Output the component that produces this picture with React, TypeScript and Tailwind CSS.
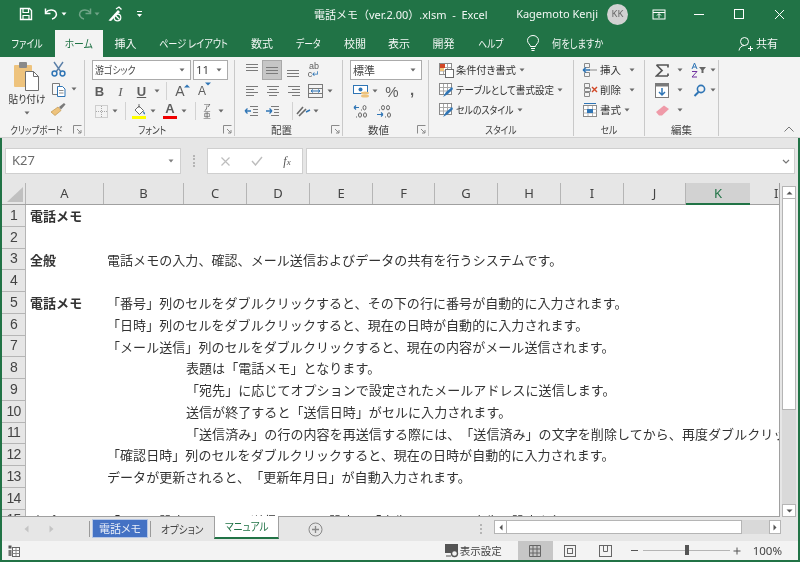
import React from "react";

const jp = "font-['Noto_Sans','Noto_Sans_CJK_JP',sans-serif]";
const ui = "font-['Noto_Sans_CJK_JP','Noto_Sans',sans-serif] [font-feature-settings:'palt']";

function Ic({ w = 16, h = 16, children, className = "" }: { w?: number; h?: number; children: React.ReactNode; className?: string }) {
  return (
    <svg width={w} height={h} viewBox={`0 0 ${w} ${h}`} fill="none" className={"block shrink-0 " + className}>
      {children}
    </svg>
  );
}

function Dd({ c = "#6a6a6a" }: { c?: string }) {
  return (
    <Ic w={6} h={4}>
      <path d="M0.5 0.5H5.5L3 3.5Z" fill={c} />
    </Ic>
  );
}

function Launcher() {
  return (
    <Ic w={9} h={9}>
      <path d="M0.5 8.5V0.5H8.5M4 4L8 8M8 5V8H5" stroke="#8a8a8a" strokeWidth="1" />
    </Ic>
  );
}

function VSep({ h = "h-[18px]" }: { h?: string }) {
  return <div className={"w-px bg-[#d2d2d2] " + h} />;
}

function Lines({ rows }: { rows: [number, number, number][] }) {
  return (
    <Ic w={14} h={14}>
      {rows.map(([x1, x2, y], i) => (
        <path key={i} d={`M${x1} ${y + 0.5}H${x2}`} stroke="#7a7a7a" strokeWidth="1" />
      ))}
    </Ic>
  );
}

function Group({ w, label, labelCls = "", pad = "", launcher, children }: { w: string; label: string; labelCls?: string; pad?: string; launcher?: boolean; children: React.ReactNode }) {
  return (
    <div className={"relative h-full flex flex-col shrink-0 " + w}>
      <div className="flex-1 min-h-0">{children}</div>
      <div className={"h-[14px] flex items-center justify-center " + pad}>
        <span className={"inline-block whitespace-nowrap text-[10.5px] leading-none text-[#444] " + labelCls + " " + ui}>{label}</span>
      </div>
      {launcher && (
        <div className="absolute right-[2px] bottom-[3px]">
          <Launcher />
        </div>
      )}
    </div>
  );
}

function RibbonDivider() {
  return <div className="w-px h-[76px] mt-[3px] bg-[#c9c9c9] shrink-0" />;
}

function TitleBar() {
  return (
    <div className="h-[28px] flex items-center text-white relative shrink-0">
      <div className="flex items-center pl-[19px]">
        <Ic w={14} h={14}>
          <path d="M1.5 1.5H10.5L12.5 3.5V12.5H1.5Z" stroke="#fff" strokeWidth="1.4" />
          <path d="M4 2V5.5H9.5V2M4 12.5V8.5H10V12.5" stroke="#fff" strokeWidth="1.2" />
        </Ic>
        <div className="ml-[11px]">
          <Ic w={15} h={14}>
            <path d="M2 5.5C4 2.5 10 2 12 5.5C13.4 8.5 11 11.5 8 12" stroke="#fff" strokeWidth="1.5" />
            <path d="M1.5 1.5V6.5H6.5" stroke="#fff" strokeWidth="1.5" />
          </Ic>
        </div>
        <div className="ml-[2px]">
          <Dd c="#ffffff" />
        </div>
        <div className="ml-[10px] opacity-35">
          <Ic w={15} h={14}>
            <path d="M13 5.5C11 2.5 5 2 3 5.5C1.6 8.5 4 11.5 7 12" stroke="#fff" strokeWidth="1.5" />
            <path d="M13.5 1.5V6.5H8.5" stroke="#fff" strokeWidth="1.5" />
          </Ic>
        </div>
        <div className="ml-[2px] opacity-35">
          <Dd c="#ffffff" />
        </div>
        <div className="ml-[7px]">
          <Ic w={16} h={16}>
            <path d="M1.5 14.5L11 4L13 6L4 15Z" fill="#fff" />
            <path d="M9 3L12 1L14.5 3.5" stroke="#fff" strokeWidth="1.3" />
            <circle cx="10.5" cy="11.5" r="3.3" stroke="#fff" strokeWidth="1.2" />
            <path d="M8.5 9.5L12.5 13.5" stroke="#fff" strokeWidth="1.2" />
          </Ic>
        </div>
        <div className="ml-[13px]">
          <Ic w={7} h={7}>
            <path d="M1 0.5H6" stroke="#fff" />
            <path d="M1 3H6L3.5 6Z" fill="#fff" />
          </Ic>
        </div>
      </div>
      <div className={"absolute left-[314px] top-[7px] text-[11px] leading-[16px] whitespace-pre text-[#f2f7f4] " + jp}>電話メモ（ver.2.00）.xlsm  -  Excel</div>
      <div className="ml-auto flex items-center">
        <span className={"text-[11px] text-[#f2f7f4] " + jp}>Kagemoto Kenji</span>
        <div className={"ml-[9px] w-[21px] h-[21px] rounded-full bg-[#d2d2d2] text-[#6b6b6b] text-[9.5px] flex items-center justify-center " + jp}>KK</div>
        <div className="ml-[24px]">
          <Ic w={14} h={11}>
            <rect x="1" y="1" width="12" height="9" stroke="#fff" strokeWidth="1" />
            <path d="M1 3.5H13" stroke="#fff" />
            <path d="M7 9V5M5 6.5L7 4.5L9 6.5" stroke="#fff" />
          </Ic>
        </div>
        <div className="ml-[28px] w-[10px] h-px bg-white" />
        <div className="ml-[30px] w-[10px] h-[10px] border border-white" />
        <div className="ml-[30px] mr-[15px]">
          <Ic w={11} h={11}>
            <path d="M1 1L10 10M10 1L1 10" stroke="#fff" strokeWidth="1" />
          </Ic>
        </div>
      </div>
    </div>
  );
}

function Tab({ w, sc = "", children }: { w: string; sc?: string; children: React.ReactNode }) {
  return (
    <div className={"h-full flex items-center justify-center text-[11px] text-[#f2f7f4] whitespace-nowrap " + w + " " + ui}>
      <span className={"inline-block " + sc}>{children}</span>
    </div>
  );
}

function TabsRow() {
  return (
    <div className="h-[29px] flex items-end shrink-0">
      <div className="h-[27px] flex items-center w-full">
        <Tab w="w-[55px]" sc="scale-x-[.82]">ファイル</Tab>
        <div className={"h-full w-[48px] bg-[#f3f3f3] text-[#217346] text-[11px] flex items-center justify-center " + ui}>
          <span className="inline-block scale-x-[.9]">ホーム</span>
        </div>
        <Tab w="w-[45px]">挿入</Tab>
        <Tab w="w-[92px]" sc="scale-x-[.83]">ページ レイアウト</Tab>
        <Tab w="w-[44px]">数式</Tab>
        <Tab w="w-[49px]" sc="scale-x-[.8]">データ</Tab>
        <Tab w="w-[44px]">校閲</Tab>
        <Tab w="w-[44px]">表示</Tab>
        <Tab w="w-[45px]">開発</Tab>
        <Tab w="w-[49px]" sc="scale-x-[.8]">ヘルプ</Tab>
        <div className="ml-[11px]">
          <Ic w={14} h={17}>
            <path d="M4.5 11.5C4.5 9.5 1.5 8.5 1.5 5.5A5.5 5 0 0 1 12.5 5.5C12.5 8.5 9.5 9.5 9.5 11.5Z" stroke="#fff" strokeWidth="1" />
            <path d="M5 13.5H9M5.5 15.5H8.5" stroke="#fff" />
          </Ic>
        </div>
        <span className={"ml-[12px] inline-block origin-left scale-x-[.84] text-[11px] text-[#f2f7f4] " + ui}>何をしますか</span>
        <div className="ml-auto flex items-center mr-[22px]">
          <Ic w={15} h={16}>
            <circle cx="6.5" cy="5.5" r="4" stroke="#fff" strokeWidth="1" />
            <path d="M1 14.5C1.5 11 4 9.5 6.5 9.5M10 12.5H15M12.5 10V15" stroke="#fff" strokeWidth="1" />
          </Ic>
          <span className={"ml-[3px] text-[11px] text-[#f2f7f4] " + ui}>共有</span>
        </div>
      </div>
    </div>
  );
}

function Slot({ w, children }: { w: string; children?: React.ReactNode }) {
  return <div className={"h-full flex items-center justify-center shrink-0 " + w}>{children}</div>;
}

function ClipboardGroup() {
  return (
    <Group w="w-[84px]" label="クリップボード" labelCls="scale-x-[.81]" pad="pr-[11px]" launcher>
      <div className="flex h-full pl-[5px]">
        <div className="w-[43px] flex flex-col items-center pt-[4px]">
          <Ic w={27} h={30}>
            <rect x="1" y="4" width="18" height="22" rx="1" fill="#eec37d" />
            <rect x="6" y="1" width="8" height="6" rx="1" fill="#8a8a8a" />
            <path d="M12.5 10.5H20.5L25.5 15.5V29.5H12.5Z" fill="#fff" stroke="#6e6e6e" />
            <path d="M20.5 10.5V15.5H25.5" stroke="#6e6e6e" />
          </Ic>
          <div className={"mt-[1px] inline-block scale-x-[.92] text-[10.5px] leading-[14px] text-[#333] whitespace-nowrap " + ui}>貼り付け</div>
          <div className="mt-[5px]">
            <Dd />
          </div>
        </div>
        <div className="flex flex-col pt-[1px] pl-[1px]">
          <div className="h-[21px] flex items-center pl-[2px]">
            <Ic w={15} h={16}>
              <path d="M3 1L10 11M12 1L5 11" stroke="#5a7fa8" strokeWidth="1.4" />
              <circle cx="3.5" cy="12.5" r="2.4" stroke="#2f75b5" strokeWidth="1.5" />
              <circle cx="11.5" cy="12.5" r="2.4" stroke="#2f75b5" strokeWidth="1.5" />
            </Ic>
          </div>
          <div className="h-[20px] flex items-center pl-[2px]">
            <Ic w={15} h={15}>
              <path d="M1.5 1.5H8.5V12.5H1.5Z" fill="#f7f7f7" stroke="#7a7a7a" />
              <path d="M6.5 4.5H11.5L14 7V14.5H6.5Z" fill="#fff" stroke="#2f75b5" />
              <path d="M8 8.5H12.5M8 11H12.5" stroke="#8a8a8a" />
            </Ic>
            <div className="ml-[5px]">
              <Dd />
            </div>
          </div>
          <div className="h-[20px] flex items-center pl-[1px]">
            <Ic w={16} h={14}>
              <path d="M1 10L8 5L11 8.5L5 13.5Z" fill="#eec37d" stroke="#b98b3c" strokeWidth="0.6" />
              <path d="M9 5L14 1L15.5 2.5L11 7.5Z" fill="#7a7a7a" />
            </Ic>
          </div>
        </div>
      </div>
    </Group>
  );
}

function FormatLetter({ children, cls }: { children: React.ReactNode; cls: string }) {
  return <span className={"text-[#5d5d5d] text-[13px] leading-none " + cls}>{children}</span>;
}

function FontGroup() {
  return (
    <Group w="w-[149px]" label="フォント" labelCls="scale-x-[.82]" pad="pr-[14px]" launcher>
      <div className="pt-[3px]">
        <div className="flex h-[20px] pl-[7px]">
          <div className={"w-[99px] h-full bg-white border border-[#ababab] flex items-center pl-[2px] pr-[5px] text-[10.5px] text-[#444] " + ui}>
            <span className="flex-1 inline-block origin-left scale-x-[.85]">游ゴシック</span>
            <Dd />
          </div>
          <div className={"ml-[2px] w-[35px] h-full bg-white border border-[#ababab] flex items-center pl-[2px] pr-[5px] text-[11.5px] text-[#444] " + jp}>
            <span className="flex-1">11</span>
            <Dd />
          </div>
        </div>
        <div className="flex h-[20px] mt-[1px] items-center pl-[4px] font-['Liberation_Sans',sans-serif]">
          <Slot w="w-[21px]"><FormatLetter cls="font-bold">B</FormatLetter></Slot>
          <Slot w="w-[21px]"><FormatLetter cls="italic font-['Liberation_Serif',serif]">I</FormatLetter></Slot>
          <Slot w="w-[21px]"><FormatLetter cls="underline font-bold">U</FormatLetter></Slot>
          <Slot w="w-[9px]"><Dd /></Slot>
          <div className="ml-[5px]"><VSep /></div>
          <Slot w="w-[24px] ml-[1px]">
            <span className="relative text-[#5d5d5d] text-[14px] leading-none">A
              <svg width="6" height="4" className="absolute -right-[5px] top-[0px]"><path d="M0 3.5L3 0.5L6 3.5Z" fill="#2f75b5" /></svg>
            </span>
          </Slot>
          <Slot w="w-[20px]">
            <span className="relative text-[#5d5d5d] text-[12px] leading-none">A
              <svg width="6" height="4" className="absolute -right-[5px] -top-[3px]"><path d="M0 0.5H6L3 3.5Z" fill="#2f75b5" /></svg>
            </span>
          </Slot>
        </div>
        <div className="flex h-[20px] items-center pl-[6px] font-['Liberation_Sans',sans-serif]">
          <Slot w="w-[20px]">
            <Ic w={13} h={13}>
              <rect x="0.5" y="0.5" width="12" height="12" stroke="#a8a8a8" strokeDasharray="1 1" />
              <path d="M6.5 1V12M1 6.5H12" stroke="#a8a8a8" strokeDasharray="1 1" />
            </Ic>
          </Slot>
          <Slot w="w-[8px]"><Dd /></Slot>
          <div className="ml-[6px]"><VSep /></div>
          <Slot w="w-[18px] ml-[4px]">
            <Ic w={15} h={16}>
              <path d="M3 7L7 3L11.5 7.5L7.5 11.5Z" fill="#fff" stroke="#6e6e6e" />
              <path d="M11 8C13 9 13.5 11 12.5 11.5C11.5 11 11 9.5 11 8Z" fill="#2f75b5" />
              <path d="M7 1V5" stroke="#6e6e6e" />
              <rect x="0" y="13" width="14" height="3" fill="#ffff00" />
            </Ic>
          </Slot>
          <Slot w="w-[10px]"><Dd /></Slot>
          <Slot w="w-[18px] ml-[3px]">
            <div className="flex flex-col items-center">
              <span className="text-[#5d5d5d] text-[13px] leading-[12px] font-bold">A</span>
              <div className="w-[14px] h-[3px] mt-[1px] bg-[#f00000]" />
            </div>
          </Slot>
          <Slot w="w-[10px]"><Dd /></Slot>
          <div className="ml-[6px]"><VSep /></div>
          <Slot w="w-[18px] ml-[2px]">
            <div className={"flex flex-col items-center text-[#5d5d5d] text-[7.5px] leading-[8px] " + ui}>
              <span>ア</span>
              <span>亜</span>
            </div>
          </Slot>
          <Slot w="w-[10px]"><Dd /></Slot>
        </div>
      </div>
    </Group>
  );
}

const alignTop: [number, number, number][] = [[1, 13, 1], [1, 13, 4], [1, 13, 7]];
const alignMid: [number, number, number][] = [[1, 13, 4], [1, 13, 7], [1, 13, 10]];
const alignBot: [number, number, number][] = [[1, 13, 7], [1, 13, 10], [1, 13, 13]];
const left: [number, number, number][] = [[1, 13, 2], [1, 9, 5], [1, 13, 8], [1, 9, 11]];
const center: [number, number, number][] = [[1, 13, 2], [3, 11, 5], [1, 13, 8], [3, 11, 11]];
const right: [number, number, number][] = [[1, 13, 2], [5, 13, 5], [1, 13, 8], [5, 13, 11]];

function AlignGroup() {
  return (
    <Group w="w-[107px]" label="配置" pad="pr-[14px]" launcher>
      <div className="pt-[3px]">
        <div className="flex h-[20px] pl-[6px] items-center">
          <Slot w="w-[21px]"><Lines rows={alignTop} /></Slot>
          <div className="h-full w-[20px] bg-[#c6c6c6] border border-[#a8a8a8] flex items-center justify-center"><Lines rows={alignMid} /></div>
          <Slot w="w-[21px]"><Lines rows={alignBot} /></Slot>
          <Slot w="w-[22px]">
            <div className="flex flex-col items-center text-[#5d5d5d] text-[9px] leading-[8px] font-['Liberation_Sans',sans-serif]">
              <span>ab</span>
              <span>c<span className="text-[#2f75b5]">↵</span></span>
            </div>
          </Slot>
        </div>
        <div className="flex h-[20px] mt-[1px] pl-[6px] items-center">
          <Slot w="w-[21px]"><Lines rows={left} /></Slot>
          <Slot w="w-[21px]"><Lines rows={center} /></Slot>
          <Slot w="w-[21px]"><Lines rows={right} /></Slot>
          <Slot w="w-[22px]">
            <Ic w={15} h={14}>
              <rect x="0.5" y="0.5" width="14" height="13" stroke="#7a7a7a" />
              <path d="M1 4.5H14M1 9.5H14" stroke="#7a7a7a" />
              <path d="M3 7H12M3 7L5 5.5M3 7L5 8.5M12 7L10 5.5M12 7L10 8.5" stroke="#2f75b5" />
            </Ic>
          </Slot>
          <Slot w="w-[7px]"><Dd /></Slot>
        </div>
        <div className="flex h-[20px] pl-[6px] items-center">
          <Slot w="w-[21px]">
            <Ic w={15} h={12}>
              <path d="M6 1.5H14M9 4.5H14M9 7.5H14M6 10.5H14" stroke="#7a7a7a" />
              <path d="M1 6H7M1 6L3.5 3.5M1 6L3.5 8.5" stroke="#2f75b5" strokeWidth="1.3" />
            </Ic>
          </Slot>
          <Slot w="w-[21px]">
            <Ic w={15} h={12}>
              <path d="M6 1.5H14M9 4.5H14M9 7.5H14M6 10.5H14" stroke="#7a7a7a" />
              <path d="M1 6H7M7 6L4.5 3.5M7 6L4.5 8.5" stroke="#2f75b5" strokeWidth="1.3" />
            </Ic>
          </Slot>
          <div className="ml-[9px]"><VSep /></div>
          <Slot w="w-[19px] ml-[1px]">
            <Ic w={15} h={13}>
              <path d="M1 9L7 2M3 11L10 4" stroke="#6a6a6a" strokeWidth="1.6" />
              <path d="M10 7L14 5" stroke="#2f75b5" strokeWidth="1.4" />
            </Ic>
          </Slot>
          <Slot w="w-[6px]"><Dd /></Slot>
        </div>
      </div>
    </Group>
  );
}

function NumberGroup() {
  return (
    <Group w="w-[85px]" label="数値" pad="pr-[14px]" launcher>
      <div className="pt-[3px]">
        <div className="flex h-[20px] pl-[7px]">
          <div className={"w-[72px] h-full bg-white border border-[#ababab] flex items-center pl-[2px] pr-[5px] text-[11px] text-[#444] " + ui}>
            <span className="flex-1">標準</span>
            <Dd />
          </div>
        </div>
        <div className="flex h-[20px] mt-[1px] pl-[8px] items-center">
          <Slot w="w-[20px]">
            <Ic w={17} h={14}>
              <rect x="0.5" y="1.5" width="14" height="8" fill="#fff" stroke="#2f75b5" />
              <circle cx="7.5" cy="5.5" r="2" fill="#2f75b5" />
              <ellipse cx="12" cy="9" rx="4" ry="1.5" fill="#eec37d" />
              <ellipse cx="12" cy="12" rx="4" ry="1.5" fill="#eec37d" />
            </Ic>
          </Slot>
          <Slot w="w-[8px]"><Dd /></Slot>
          <Slot w="w-[26px]"><span className="text-[#5d5d5d] text-[15px] leading-none font-['Liberation_Sans',sans-serif]">%</span></Slot>
          <Slot w="w-[14px]"><span className="text-[#5d5d5d] text-[15px] leading-none font-bold font-['Liberation_Sans',sans-serif] -mt-[4px]">,</span></Slot>
        </div>
        <div className="flex h-[20px] pl-[8px] items-center">
          <Slot w="w-[20px]">
            <Ic w={17} h={14}>
              <path d="M1 3.5H6M1 3.5L3 1.5M1 3.5L3 5.5" stroke="#2f75b5" strokeWidth="1.2" />
              <path d="M8 6H9M11.5 1.5A1.5 2.2 0 1 0 11.5 5.9A1.5 2.2 0 1 0 11.5 1.5Z" stroke="#666" />
              <path d="M3 13H4M7 8.8A1.5 2.2 0 1 0 7 13.2A1.5 2.2 0 1 0 7 8.8ZM12 8.8A1.5 2.2 0 1 0 12 13.2A1.5 2.2 0 1 0 12 8.8Z" stroke="#666" />
            </Ic>
          </Slot>
          <Slot w="w-[3px]" />
          <Slot w="w-[20px]">
            <Ic w={17} h={14}>
              <path d="M3 6H4M7 1.5A1.5 2.2 0 1 0 7 5.9A1.5 2.2 0 1 0 7 1.5ZM12 1.5A1.5 2.2 0 1 0 12 5.9A1.5 2.2 0 1 0 12 1.5Z" stroke="#666" />
              <path d="M1 10.5H7M7 10.5L5 8.5M7 10.5L5 12.5" stroke="#2f75b5" strokeWidth="1.2" />
              <path d="M9 13H10M13 8.8A1.5 2.2 0 1 0 13 13.2A1.5 2.2 0 1 0 13 8.8Z" stroke="#666" />
            </Ic>
          </Slot>
        </div>
      </div>
    </Group>
  );
}

function CmdRow({ icon, label, lw, sc = "", dd }: { icon: React.ReactNode; label: string; lw: string; sc?: string; dd: string }) {
  return (
    <div className="flex h-[20px] items-center">
      {icon}
      <div className={"ml-[2px] shrink-0 h-full flex items-center " + lw}>
        <span className={"inline-block origin-left text-[10.5px] leading-none text-[#333] whitespace-nowrap " + sc + " " + ui}>{label}</span>
      </div>
      <div className={dd}>
        <Dd />
      </div>
    </div>
  );
}

function GridIc({ accent }: { accent: "cond" | "table" | "cell" }) {
  return (
    <Ic w={16} h={16}>
      <rect x="1.5" y="1.5" width="12" height="11" fill="#fff" stroke="#8a8a8a" />
      <path d="M5.5 2V12M9.5 2V12M2 5.5H13M2 9H13" stroke="#a8a8a8" />
      {accent === "cond" && <rect x="2" y="2" width="5" height="4" fill="#d24726" />}
      {accent === "cond" && <rect x="2" y="6" width="4" height="3" fill="#eec37d" />}
      {accent === "cond" && <rect x="7.5" y="7.5" width="8" height="8" fill="#fff" stroke="#6a6a6a" />}
      {accent !== "cond" && <path d="M5 15L8 10L14 5L15 7L10 12Z" fill="#2f75b5" />}
    </Ic>
  );
}

function StyleGroup() {
  return (
    <Group w="w-[144px]" label="スタイル" labelCls="scale-x-[.83]">
      <div className="pt-[3px] pl-[9px]">
        <CmdRow icon={<GridIc accent="cond" />} label="条件付き書式" lw="w-[60px]" sc="scale-x-[.97]" dd="ml-[3px]" />
        <CmdRow icon={<GridIc accent="table" />} label="テーブルとして書式設定" lw="w-[98px]" sc="scale-x-[.91]" dd="ml-[3px]" />
        <CmdRow icon={<GridIc accent="cell" />} label="セルのスタイル" lw="w-[58px]" sc="scale-x-[.85]" dd="ml-[3px]" />
      </div>
    </Group>
  );
}

function CellGroup() {
  return (
    <Group w="w-[70px]" label="セル" labelCls="scale-x-[.85]">
      <div className="pt-[3px] pl-[8px]">
        <CmdRow
          dd="ml-[8px]"
          label="挿入"
          lw="w-[21px]"
          icon={
            <Ic w={16} h={16}>
              <path d="M2.5 1.5H7.5V5.5H2.5ZM2.5 10.5H7.5V14.5H2.5Z" stroke="#8a8a8a" />
              <path d="M7 8H15" stroke="#8a8a8a" />
              <path d="M1 8H8M1 8L4 5.5M1 8L4 10.5" stroke="#2f75b5" strokeWidth="1.3" />
            </Ic>
          }
        />
        <CmdRow
          dd="ml-[8px]"
          label="削除"
          lw="w-[21px]"
          icon={
            <Ic w={16} h={16}>
              <path d="M2.5 1.5H7.5V5.5H2.5ZM2.5 10.5H7.5V14.5H2.5ZM2.5 6.5H8.5V9.5H2.5Z" stroke="#8a8a8a" />
              <path d="M10 5L15 10M15 5L10 10" stroke="#d24726" strokeWidth="1.4" />
            </Ic>
          }
        />
        <CmdRow
          dd="ml-[3px]"
          label="書式"
          lw="w-[21px]"
          icon={
            <Ic w={16} h={16}>
              <rect x="1.5" y="3.5" width="13" height="11" fill="#fff" stroke="#8a8a8a" />
              <path d="M1.5 7.5H14.5M1.5 11H14.5M6 4V14M10.5 4V14" stroke="#b5b5b5" />
              <rect x="5" y="7" width="6" height="4" fill="#2f75b5" />
              <path d="M2 1.5H14" stroke="#2f75b5" />
            </Ic>
          }
        />
      </div>
    </Group>
  );
}

function EditGroup() {
  return (
    <Group w="w-[73px]" label="編集">
      <div className="pt-[3px] pl-[9px]">
        <div className="flex h-[20px] items-center">
          <Slot w="w-[16px]">
            <Ic w={15} h={15}>
              <path d="M1.5 2H13V4.5M13 13V10.5M13 13H1.5L7 7.5L1.5 2" stroke="#555" strokeWidth="1.7" />
            </Ic>
          </Slot>
          <Slot w="w-[14px] ml-[3px]"><Dd /></Slot>
          <Slot w="w-[19px] ml-[3px]">
            <Ic w={18} h={16}>
              <path d="M1 7L3.5 1L6 7M2 5H5" stroke="#2f75b5" />
              <path d="M1 9.5H6L1 15H6" stroke="#7030a0" />
              <path d="M8 5H15L12.5 8V11H10.5V8Z" fill="#666" />
            </Ic>
          </Slot>
          <Slot w="w-[8px]"><Dd /></Slot>
        </div>
        <div className="flex h-[20px] items-center">
          <Slot w="w-[16px]">
            <Ic w={14} h={15}>
              <rect x="0.5" y="0.5" width="13" height="14" fill="#fff" stroke="#7a7a7a" />
              <rect x="0.5" y="0.5" width="13" height="3" fill="#7a7a7a" />
              <path d="M7 5V12M4 9L7 12L10 9" stroke="#2f75b5" strokeWidth="1.5" />
            </Ic>
          </Slot>
          <Slot w="w-[14px] ml-[3px]"><Dd /></Slot>
          <Slot w="w-[19px] ml-[3px]">
            <Ic w={13} h={13}>
              <circle cx="8" cy="5" r="3.6" stroke="#2f75b5" strokeWidth="1.6" />
              <path d="M5.5 8L1.5 12" stroke="#2f75b5" strokeWidth="2" />
            </Ic>
          </Slot>
          <Slot w="w-[8px]"><Dd /></Slot>
        </div>
        <div className="flex h-[20px] items-center">
          <Slot w="w-[16px]">
            <Ic w={15} h={13}>
              <path d="M1 8L9 1.5L14 5L7 11.5H4Z" fill="#ef9aa8" />
            </Ic>
          </Slot>
          <Slot w="w-[14px] ml-[3px]"><Dd /></Slot>
        </div>
      </div>
    </Group>
  );
}

function Ribbon() {
  return (
    <div className="h-[81px] bg-[#f3f3f3] border-b border-[#d0d0d0] flex shrink-0 relative">
      <ClipboardGroup />
      <RibbonDivider />
      <FontGroup />
      <RibbonDivider />
      <AlignGroup />
      <RibbonDivider />
      <NumberGroup />
      <RibbonDivider />
      <StyleGroup />
      <RibbonDivider />
      <CellGroup />
      <RibbonDivider />
      <EditGroup />
      <RibbonDivider />
      <div className="absolute right-[6px] bottom-[5px]">
        <Ic w={10} h={6}>
          <path d="M0.5 5.5L5 1L9.5 5.5" stroke="#777" />
        </Ic>
      </div>
    </div>
  );
}

function FormulaBar() {
  return (
    <div className="h-[45px] pt-[10px] pl-[3px] pr-[3px] flex shrink-0">
      <div className={"w-[176px] h-[26px] bg-white border border-[#cfcfcf] flex items-center pl-[6px] pr-[6px] text-[13px] text-[#6a6a6a] " + jp}>
        <span className="flex-1">K27</span>
        <Dd c="#808080" />
      </div>
      <div className="w-[26px] h-[26px] flex items-center justify-center">
        <div className="w-[2px] h-[12px] border-l-2 border-dotted border-[#b5b5b5]" />
      </div>
      <div className="w-[96px] h-[26px] bg-white border border-[#cfcfcf] flex items-center">
        <Slot w="w-[32px] ml-[1px]">
          <Ic w={9} h={9}><path d="M0.5 0.5L8.5 8.5M8.5 0.5L0.5 8.5" stroke="#bdbdbd" strokeWidth="1.2" /></Ic>
        </Slot>
        <Slot w="w-[31px]">
          <Ic w={12} h={10}><path d="M1 5L4.5 9L11 1" stroke="#bdbdbd" strokeWidth="1.4" /></Ic>
        </Slot>
        <Slot w="w-[30px]">
          <span className="text-[12px] italic font-['Liberation_Serif',serif] text-[#555]">f<span className="text-[9px]">x</span></span>
        </Slot>
      </div>
      <div className="ml-[3px] flex-1 h-[26px] bg-white border border-[#cfcfcf] flex items-center justify-end pr-[4px]">
        <Ic w={8} h={5}><path d="M1 1L4 4L7 1" stroke="#777" strokeWidth="1.2" /></Ic>
      </div>
    </div>
  );
}

const cols = [
  ["A", "w-[78px]"],
  ["B", "w-[80px]"],
  ["C", "w-[63px]"],
  ["D", "w-[63px]"],
  ["E", "w-[63px]"],
  ["F", "w-[62px]"],
  ["G", "w-[63px]"],
  ["H", "w-[63px]"],
  ["I", "w-[63px]"],
  ["J", "w-[62px]"],
  ["K", "w-[64px]"],
] as const;

function ColumnHeaders() {
  return (
    <div className="h-[22px] flex shrink-0 border-b border-[#a0a0a0]">
      <div className="w-[24px] shrink-0 h-full border-r border-[#b5b5b5] flex items-end justify-end pb-[2px] pr-[2px]">
        <Ic w={16} h={15}><path d="M16 0V15H0Z" fill="#c0c0c0" /></Ic>
      </div>
      {cols.map(([c, w]) =>
        c === "K" ? (
          <div key={c} className={"-mb-px shrink-0 h-[22px] pt-[1px] bg-[#d2d2d2] border-b-2 border-[#217346] flex items-center justify-center text-[13px] text-[#217346] " + w + " " + jp}>{c}</div>
        ) : (
          <div key={c} className={"shrink-0 h-full pt-[1px] border-r border-[#b5b5b5] flex items-center justify-center text-[13px] text-[#444] " + w + " " + jp}>{c}</div>
        ),
      )}
      <div className={"flex-1 min-w-0 h-full pt-[1px] flex items-center pl-[24px] text-[13px] text-[#444] " + jp}>I</div>
    </div>
  );
}

const sheetRows: { n: number; a?: string; pad?: "b" | "c"; t?: string }[] = [
  { n: 1, a: "電話メモ" },
  { n: 2 },
  { n: 3, a: "全般", t: "電話メモの入力、確認、メール送信およびデータの共有を行うシステムです。", pad: "b" },
  { n: 4 },
  { n: 5, a: "電話メモ", t: "「番号」列のセルをダブルクリックすると、その下の行に番号が自動的に入力されます。", pad: "b" },
  { n: 6, t: "「日時」列のセルをダブルクリックすると、現在の日時が自動的に入力されます。", pad: "b" },
  { n: 7, t: "「メール送信」列のセルをダブルクリックすると、現在の内容がメール送信されます。", pad: "b" },
  { n: 8, t: "表題は「電話メモ」となります。", pad: "c" },
  { n: 9, t: "「宛先」に応じてオプションで設定されたメールアドレスに送信します。", pad: "c" },
  { n: 10, t: "送信が終了すると「送信日時」がセルに入力されます。", pad: "c" },
  { n: 11, t: "「送信済み」の行の内容を再送信する際には、「送信済み」の文字を削除してから、再度ダブルクリックしてください。", pad: "c" },
  { n: 12, t: "「確認日時」列のセルをダブルクリックすると、現在の日時が自動的に入力されます。", pad: "b" },
  { n: 13, t: "データが更新されると、「更新年月日」が自動入力されます。", pad: "b" },
  { n: 14 },
  { n: 15, a: "オプション", t: "「メール設定」シートに送信に関する設定、「宛先」シートに宛先の設定を行います。", pad: "b" },
];

function Sheet() {
  return (
    <div className="flex-1 min-h-0 overflow-hidden border-b border-[#a0a0a0] flex flex-col bg-white">
      {sheetRows.map((r) => (
        <div key={r.n} className="h-[21.75px] shrink-0 flex">
          <div className="w-[24px] shrink-0 bg-[#e6e6e6] border-r border-b border-[#b5b5b5] flex items-center justify-center text-[14px] tracking-[-0.8px] text-[#444] font-['Liberation_Sans',sans-serif]">{r.n}</div>
          <div className="flex-1 min-w-0 flex items-center text-[13px] tracking-[0.06px] text-[#333] whitespace-nowrap overflow-hidden [text-spacing-trim:space-all] font-['Noto_Sans_CJK_JP',sans-serif]">
            {r.a && <span className="pl-[4px] w-[81px] shrink-0 font-bold">{r.a}</span>}
            {!r.a && r.pad === "b" && <span className="w-[81px] shrink-0" />}
            {!r.a && r.pad === "c" && <span className="w-[160px] shrink-0" />}
            {r.t && <span className="shrink-0">{r.t}</span>}
          </div>
        </div>
      ))}
    </div>
  );
}

function VScroll() {
  return (
    <div className="w-[18px] pl-[2px] pr-[2px] pt-[3px] flex flex-col shrink-0">
      <div className="h-[13px] shrink-0 bg-white border border-[#b5b5b5] flex items-center justify-center">
        <Ic w={7} h={4}><path d="M0.5 3.5L3.5 0.5L6.5 3.5Z" fill="#555" /></Ic>
      </div>
      <div className="h-[211px] shrink-0 bg-white border-x border-b border-[#b5b5b5]" />
      <div className="flex-1 bg-[#d9d9d9]" />
      <div className="h-[13px] shrink-0 bg-white border border-[#b5b5b5] flex items-center justify-center">
        <Ic w={7} h={4}><path d="M0.5 0.5H6.5L3.5 3.5Z" fill="#555" /></Ic>
      </div>
    </div>
  );
}

function SheetTabs() {
  return (
    <div className={"relative h-[24px] flex items-stretch shrink-0 pr-[2px] bg-[#e6e6e6] " + ui}>
      <div className="w-[87px] flex items-center pl-[22px]">
        <Ic w={5} h={8}><path d="M4.5 0.5V7.5L0.5 4Z" fill="#c4c4c4" /></Ic>
        <div className="ml-[20px]"><Ic w={5} h={8}><path d="M0.5 0.5V7.5L4.5 4Z" fill="#c4c4c4" /></Ic></div>
      </div>
      <div className="w-px h-[16px] self-center bg-[#9a9a9a]" />
      <div className="ml-[2px] mt-[2px] mb-[3px] w-[56px] bg-[#4472c4] border border-[#b6c7e6] text-[#e8eef8] text-[11px] flex items-center justify-center">電話メモ</div>
      <div className="ml-[2px] w-px h-[16px] self-center bg-[#9a9a9a]" />
      <div className="w-[63px] text-[#444] text-[11px] flex items-center justify-center">
        <span className="inline-block scale-x-[.88]">オプション</span>
      </div>
      <div className="w-[65px] -mt-px mb-[2px] bg-white border-x border-b-2 border-x-[#a0a0a0] border-b-[#217346] text-[#217346] text-[11px] flex items-center justify-center">
        <span className="inline-block scale-x-[.88]">マニュアル</span>
      </div>
      <div className="ml-[29px] self-center">
        <Ic w={15} h={15}>
          <circle cx="7.5" cy="7.5" r="6.5" stroke="#888" />
          <path d="M7.5 4V11M4 7.5H11" stroke="#888" strokeWidth="1.3" />
        </Ic>
      </div>
      <div className="ml-auto mr-[12px] flex items-center">
        <div className="w-[2px] h-[10px] border-l-2 border-dotted border-[#b5b5b5]" />
      </div>
      <div className="w-[287px] h-[14px] mt-[3px] flex mr-[15px]">
        <div className="w-[13px] bg-white border border-[#b5b5b5] flex items-center justify-center">
          <Ic w={4} h={7}><path d="M3.5 0.5V6.5L0.5 3.5Z" fill="#555" /></Ic>
        </div>
        <div className="w-[235px] bg-white border-y border-r border-[#b5b5b5]" />
        <div className="flex-1 bg-[#d9d9d9]" />
        <div className="w-[12px] bg-white border border-[#b5b5b5] flex items-center justify-center">
          <Ic w={4} h={7}><path d="M0.5 0.5V6.5L3.5 3.5Z" fill="#555" /></Ic>
        </div>
      </div>
    </div>
  );
}

function StatusBar() {
  return (
    <div className="h-[19px] bg-[#f3f3f3] flex items-center shrink-0 pr-[16px]">
      <div className="ml-[6px]">
        <Ic w={12} h={12}>
          <rect x="0.5" y="0.5" width="3" height="3" fill="#555" />
          <rect x="4.5" y="2.5" width="7" height="9" fill="#fff" stroke="#666" />
          <path d="M4.5 5.5H11.5M4.5 8.5H11.5M8 3V11" stroke="#888" />
          <rect x="0.5" y="5" width="3" height="6" fill="#777" />
        </Ic>
      </div>
      <div className="ml-auto flex items-center h-full">
        <Ic w={14} h={14}>
          <rect x="0" y="0" width="13" height="9" fill="#555" />
          <circle cx="9.5" cy="9.5" r="3" fill="#f3f3f3" stroke="#555" strokeWidth="1.4" />
          <path d="M1 12H6" stroke="#555" />
        </Ic>
        <span className={"ml-[1px] text-[10.5px] text-[#444] w-[43px] whitespace-nowrap " + ui}>表示設定</span>
        <div className="ml-[15px] w-[35px] h-full bg-[#c6c6c6] flex items-center justify-center">
          <Ic w={12} h={12}>
            <path d="M0.5 0.5H11.5V11.5H0.5ZM4 1V11M8 1V11M1 4H11M1 8H11" stroke="#666" />
          </Ic>
        </div>
        <div className="w-[35px] flex items-center justify-center">
          <Ic w={12} h={12}>
            <rect x="0.5" y="0.5" width="11" height="11" stroke="#666" />
            <rect x="3.5" y="3.5" width="5" height="5" stroke="#666" />
          </Ic>
        </div>
        <div className="w-[35px] flex items-center justify-center">
          <Ic w={13} h={12}>
            <rect x="0.5" y="0.5" width="12" height="11" stroke="#666" />
            <path d="M4.5 1V6.5H8.5V1" stroke="#666" />
          </Ic>
        </div>
        <div className="ml-[8px] w-[7px] h-px bg-[#555]" />
        <div className="ml-[5px] w-[87px] h-px bg-[#b5b5b5] relative">
          <div className="absolute left-[42px] -top-[5px] w-[4px] h-[10px] bg-[#555]" />
        </div>
        <div className="ml-[3px]">
          <Ic w={8} h={8}><path d="M4 0.5V7.5M0.5 4H7.5" stroke="#555" /></Ic>
        </div>
        <span className={"ml-[12px] text-[11.5px] text-[#444] " + jp}>100%</span>
      </div>
    </div>
  );
}

export default function App() {
  return (
    <div className="w-[800px] h-[562px] overflow-hidden bg-[#217346] flex flex-col blur-[0.3px]">
      <TitleBar />
      <TabsRow />
      <Ribbon />
      <div className="flex-1 min-h-0 mx-[2px] mb-[2px] bg-[#e6e6e6] flex flex-col">
        <FormulaBar />
        <div className="flex-1 min-h-0 flex overflow-hidden">
          <div className="flex-1 min-w-0 flex flex-col border-r border-[#a0a0a0]">
            <ColumnHeaders />
            <Sheet />
          </div>
          <VScroll />
        </div>
        <SheetTabs />
        <StatusBar />
      </div>
    </div>
  );
}
